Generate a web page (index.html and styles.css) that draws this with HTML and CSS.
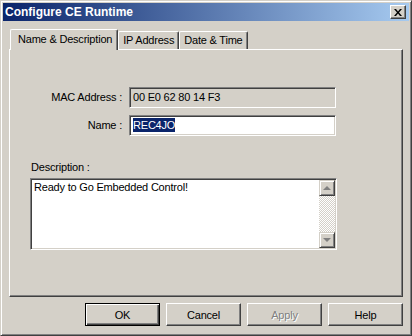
FILE: index.html
```html
<!DOCTYPE html>
<html lang="en">
<head>
  <meta charset="UTF-8" />
  <title>Configure CE Runtime</title>
  <link rel="stylesheet" href="styles.css">
</head>
<body>
  <div class="window">
    <div class="titlebar">
      <span class="title">Configure CE Runtime</span>
      <span class="close-btn">
        <svg width="8" height="7" viewBox="0 0 8 7"><path d="M0 0h2l2 2.5L6 0h2L5 3.5 8 7H6L4 4.5 2 7H0l3-3.5z" fill="#000"/></svg>
      </span>
    </div>

    <div class="content">
      <div class="tabs">
        <div class="tab active">Name &amp; Description</div>
        <div class="tab">IP Address</div>
        <div class="tab">Date &amp; Time</div>
      </div>

      <div class="panel">
        <div class="form-grid">
          <label class="field-label">MAC Address :</label>
          <div class="edit disabled">00 E0 62 80 14 F3</div>
          <label class="field-label">Name :</label>
          <div class="edit"><span class="selected">REC4JO</span></div>
        </div>

        <div class="desc-label">Description :</div>
        <div class="memo">
          <div class="memo-text">Ready to Go Embedded Control!</div>
          <div class="scrollbar">
            <div class="scroll-btn"><span class="arrow up"></span></div>
            <div class="scroll-track"></div>
            <div class="scroll-btn"><span class="arrow down"></span></div>
          </div>
        </div>
      </div>

      <div class="buttons">
        <div class="btn default">OK</div>
        <div class="btn">Cancel</div>
        <div class="btn disabled">Apply</div>
        <div class="btn">Help</div>
      </div>
    </div>
  </div>
</body>
</html>
```

FILE: styles.css
```css
body {
  margin: 0;
  font-family: "Liberation Sans", Arial, sans-serif;
  font-size: 11px;
  letter-spacing: -0.2px;
  color: #000;
  background: #d4d0c8;
}
.window {
  box-sizing: border-box;
  width: 412px;
  height: 336px;
  background: #d4d0c8;
  border: 1px solid;
  border-color: #d4d0c8 #404040 #404040 #d4d0c8;
  box-shadow: inset 1px 1px 0 #fff, inset -1px -1px 0 #808080;
  padding: 2px;
}
.titlebar {
  height: 18px;
  display: flex;
  align-items: center;
  justify-content: space-between;
  padding: 0 3px 0 2px;
  background: linear-gradient(to right, #0a246a, #a6caf0);
}
.title {
  color: #fff;
  font-weight: bold;
  font-size: 12px;
  letter-spacing: 0;
}
.close-btn {
  box-sizing: border-box;
  width: 16px;
  height: 14px;
  display: flex;
  align-items: center;
  justify-content: center;
  background: #d4d0c8;
  border: 1px solid;
  border-color: #fff #404040 #404040 #fff;
  box-shadow: inset -1px -1px 0 #808080;
}
.content {
  padding: 0 6px;
}
.tabs {
  display: flex;
  align-items: flex-end;
  height: 20px;
  margin-top: 8px;
  padding-left: 1px;
}
.tab {
  box-sizing: border-box;
  height: 18px;
  padding: 2px 4px 0 4px;
  border: 1px solid;
  border-bottom: none;
  border-color: #fff #404040 #fff #fff;
  border-radius: 2px 2px 0 0;
  box-shadow: inset -1px 0 0 #808080;
  white-space: nowrap;
}
.tab.active {
  height: 21px;
  padding: 3px 5px 0 7px;
  margin: 0 -2px -1px 0;
  position: relative;
  z-index: 1;
  background: #d4d0c8;
}
.tab.active + .tab {
  margin-left: 2px;
}
.panel {
  box-sizing: border-box;
  height: 248px;
  border: 1px solid;
  border-color: #fff #404040 #404040 #fff;
  box-shadow: inset -1px -1px 0 #808080;
  padding: 37px 0 0 20px;
}
.form-grid {
  display: grid;
  grid-template-columns: 92px 207px;
  column-gap: 7px;
  row-gap: 7px;
}
.field-label {
  text-align: right;
  line-height: 21px;
}
.edit {
  box-sizing: border-box;
  height: 21px;
  border: 1px solid;
  border-color: #808080 #fff #fff #808080;
  box-shadow: inset 1px 1px 0 #404040, inset -1px -1px 0 #d4d0c8;
  background: #fff;
  padding: 3px 2px 0 3px;
  line-height: 13px;
}
.edit.disabled {
  background: #d4d0c8;
}
.selected {
  background: #0a246a;
  color: #fff;
  padding: 1px 0;
}
.desc-label {
  margin: 25px 0 4px 1px;
  line-height: 13px;
}
.memo {
  box-sizing: border-box;
  width: 307px;
  height: 72px;
  display: flex;
  border: 1px solid;
  border-color: #808080 #fff #fff #808080;
  box-shadow: inset 1px 1px 0 #404040, inset -1px -1px 0 #d4d0c8;
  background: #fff;
  padding: 2px 1px 1px 2px;
}
.memo-text {
  flex: 1;
  padding-left: 1px;
  line-height: 13px;
}
.scrollbar {
  width: 16px;
  display: flex;
  flex-direction: column;
  margin-top: -1px;
}
.scroll-track {
  flex: 1;
  background: repeating-conic-gradient(#fff 0 25%, #d4d0c8 0 50%) 0 0 / 2px 2px;
}
.scroll-btn {
  box-sizing: border-box;
  height: 16px;
  display: flex;
  align-items: center;
  justify-content: center;
  background: #d4d0c8;
  border: 1px solid;
  border-color: #d4d0c8 #404040 #404040 #d4d0c8;
  box-shadow: inset 1px 1px 0 #fff, inset -1px -1px 0 #808080;
}
.arrow {
  width: 0;
  height: 0;
  border-left: 4px solid transparent;
  border-right: 4px solid transparent;
}
.arrow.up {
  border-bottom: 4px solid #808080;
}
.arrow.down {
  border-top: 4px solid #808080;
}
.buttons {
  display: flex;
  justify-content: flex-end;
  gap: 6px;
  margin-top: 6px;
}
.btn {
  box-sizing: border-box;
  width: 75px;
  height: 23px;
  display: flex;
  align-items: center;
  justify-content: center;
  border: 1px solid;
  border-color: #fff #404040 #404040 #fff;
  box-shadow: inset -1px -1px 0 #808080;
}
.btn.default {
  border-color: #000;
  box-shadow: inset 1px 1px 0 #fff, inset -1px -1px 0 #404040, inset -2px -2px 0 #808080;
}
.btn.disabled {
  color: #808080;
  text-shadow: 1px 1px 0 #fff;
}
```
